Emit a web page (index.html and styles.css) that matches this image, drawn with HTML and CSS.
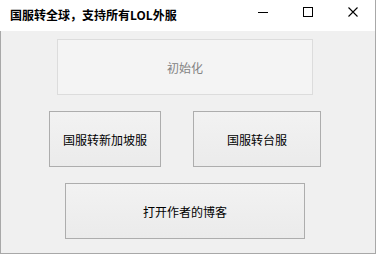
FILE: index.html
```html
<!DOCTYPE html>
<html lang="zh-CN">
<head>
  <meta charset="UTF-8" />
  <title>国服转全球</title>
  <link rel="stylesheet" href="styles.css">
</head>
<body>
  <div class="window">
    <div class="titlebar">
      <span class="title">国服转全球，支持所有LOL外服</span>
      <div class="controls">
        <span class="ctl">
          <svg width="12" height="12" viewBox="0 0 12 12"><path d="M1 6.5h10" stroke="#000" stroke-width="1"/></svg>
        </span>
        <span class="ctl">
          <svg width="12" height="12" viewBox="0 0 12 12"><rect x="1.5" y="1.5" width="9" height="9" fill="none" stroke="#000" stroke-width="1"/></svg>
        </span>
        <span class="ctl">
          <svg width="12" height="12" viewBox="0 0 12 12"><path d="M1.5 1.5l9 9M10.5 1.5l-9 9" stroke="#000" stroke-width="1.1"/></svg>
        </span>
      </div>
    </div>
    <div class="content">
      <div class="row row-init">
        <button class="btn btn-init" disabled>初始化</button>
      </div>
      <div class="row row-servers">
        <button class="btn btn-sg">国服转新加坡服</button>
        <button class="btn btn-tw">国服转台服</button>
      </div>
      <div class="row row-blog">
        <button class="btn btn-blog">打开作者的博客</button>
      </div>
    </div>
  </div>
</body>
</html>
```

FILE: styles.css
```css
body {
  margin: 0;
  font-family: "Noto Sans CJK SC", "Liberation Sans", sans-serif;
  background: #f0f0f0;
}
.window {
  width: 376px;
  height: 254px;
  box-sizing: border-box;
  border-right: 1px solid #a8a8a8;
  display: flex;
  flex-direction: column;
}
.titlebar {
  height: 31px;
  background: #fff;
  display: flex;
  align-items: center;
  justify-content: space-between;
  padding-left: 10px;
}
.title {
  font-size: 12px;
  font-weight: bold;
  color: #000;
  margin-top: -2px;
}
.controls {
  display: flex;
  align-self: flex-start;
}
.ctl {
  width: 45px;
  height: 24px;
  display: flex;
  align-items: center;
  justify-content: center;
}
.content {
  flex: 1;
  border-left: 1px solid #a8a8a8;
  border-bottom: 1px solid #a8a8a8;
  display: flex;
  flex-direction: column;
  gap: 16px;
  padding-top: 8px;
}
.row {
  display: flex;
}
.btn {
  height: 56px;
  font-family: inherit;
  font-size: 12px;
  color: #000;
  background: linear-gradient(#f2f2f2, #ebebeb);
  border: 1px solid #adadad;
  padding: 0;
}
.btn-init {
  margin-left: 56px;
  width: 256px;
  color: #838383;
  border-color: #dcdcdc;
  background: #f4f4f4;
}
.btn-sg {
  margin-left: 48px;
  width: 112px;
}
.btn-tw {
  margin-left: 32px;
  width: 128px;
}
.btn-blog {
  margin-left: 64px;
  width: 240px;
}
```
